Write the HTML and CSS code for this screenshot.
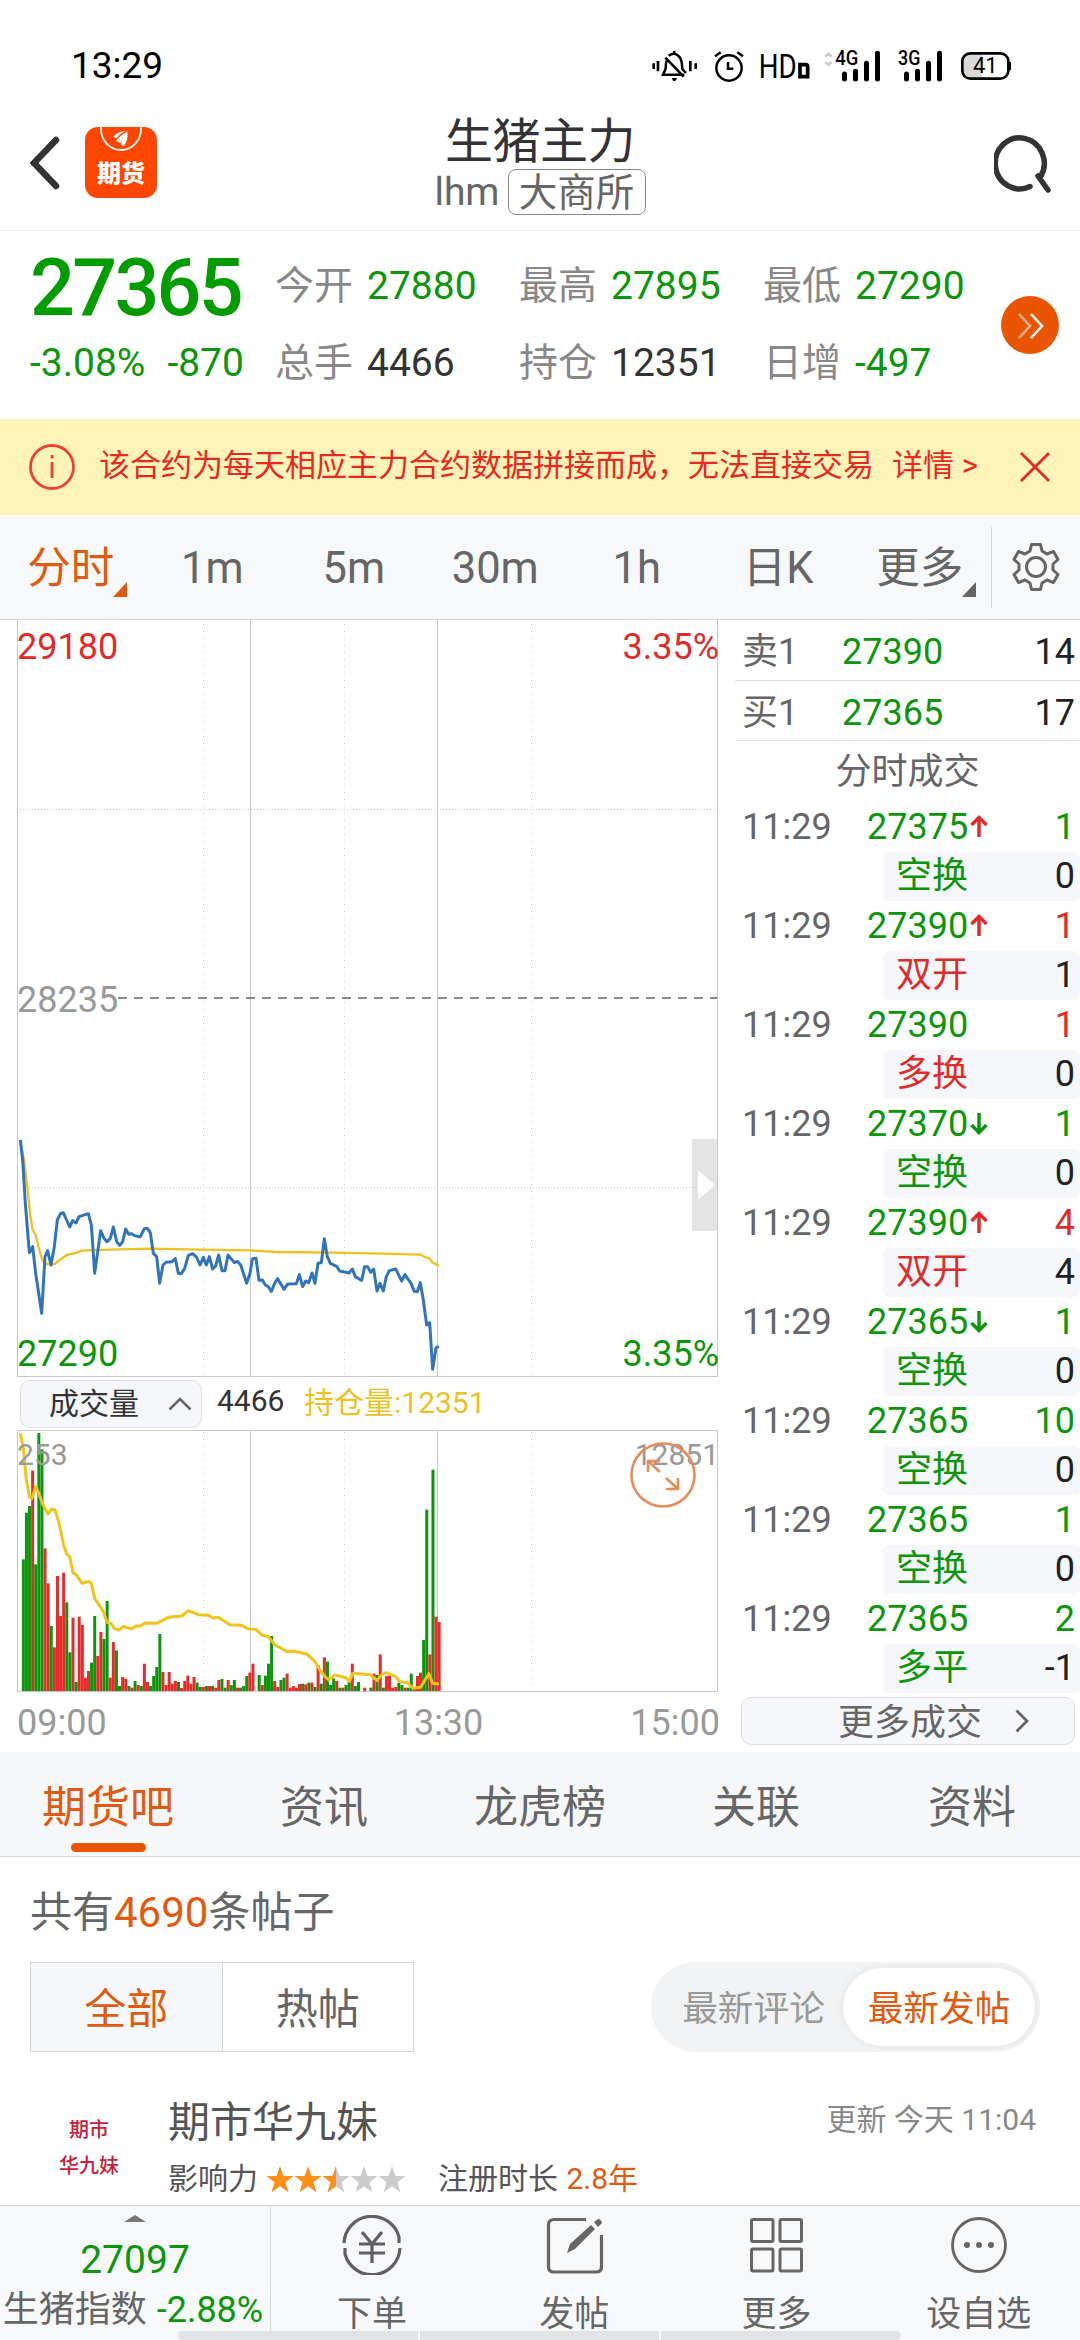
FILE: index.html
```html
<!DOCTYPE html>
<html lang="zh-CN">
<head>
    <meta charset="UTF-8">
    <title>生猪主力 lhm</title>
    <meta name="viewport" content="width=device-width, initial-scale=1.0">
    <link rel="stylesheet" href="styles.css">
</head>
<body>
    <div class="status-bar">
        <span class="status-time">13:29</span>
        <svg class="status-icons" viewBox="0 0 1200 150" fill="none" stroke="#000" stroke-width="7.500">
            <!-- 静音振动 -->
            <path d="M41 70v17M54 63v31M151 63v31M167 70v17" stroke-width="8"/>
            <path d="M80 62q-3 8-3 24l-8 18h64M86 47q17-12 31 2q9 9 10 38l11 12M76 53l55 57M103 33v8"/>
            <path d="M95 114h17l-6 9h-6z" fill="#000" stroke="none"/>
            <!-- 闹钟 -->
            <circle cx="267" cy="84" r="38"/>
            <path d="M225 49l17-12M309 49l-17-12M264 66v20h16"/>
            <text class="status-text" x="356" y="114" font-size="99" textLength="114" lengthAdjust="spacingAndGlyphs">HD</text>
            <path d="M480 74h17q6 0 6 6v30h-23z" stroke-width="11"/>
            <!-- 信号 -->
            <path d="M556 50l9-9l9 9M556 66l9 9l9-9" stroke="#ccc"/>
            <text class="status-text" x="586" y="76" font-size="58" font-weight="500" textLength="69" lengthAdjust="spacingAndGlyphs">4G</text>
            <path d="M613.500 102v15M646.500 94v23M679.500 70v47M712.500 40v77" stroke-width="15" stroke-linecap="round"/>
            <text class="status-text" x="774" y="76" font-size="58" font-weight="500" textLength="67" lengthAdjust="spacingAndGlyphs">3G</text>
            <path d="M799.500 102v15M832.500 94v23M865.500 70v47M898.500 40v77" stroke-width="15" stroke-linecap="round"/>
            <!-- 电量 -->
            <path d="M1026 40h-36q-23 0-23 24v28q0 24 23 24h36z" fill="#d9d9d9" stroke="none"/>
            <rect x="967" y="40" width="138" height="76" rx="24" stroke-width="8"/>
            <path d="M1105 66h8v24h-8z" fill="#000" stroke="none"/>
            <text class="status-text" x="1036" y="99" font-size="66" text-anchor="middle">41</text>
        </svg>
    </div>

    <header class="header">
        <div class="header-left">
            <svg class="back-icon" viewBox="0 0 30 54" fill="none" stroke="#333" stroke-width="6.500" stroke-linecap="round"><path d="M26 4L4 27L26 50"/></svg>
            <div class="app-logo">
                <svg class="logo-mark" viewBox="0 0 42 25" fill="none" stroke="#fff" stroke-width="1.800">
                    <path d="M1 0v2a20 21 0 0 0 40 0V0"/>
                    <path d="M13 10q5-6 13-6q-6 2-9 7zM16 14q4-6 11-9q-5 5-6 11zM21 18q1-8 6-14q2 8-3 15z" fill="#fff" stroke="none"/>
                </svg>
                <span class="logo-name">期货</span>
            </div>
        </div>
        <div class="header-title">
            <h1 class="title">生猪主力</h1>
            <div class="subtitle"><span>lhm</span><span class="exchange">大商所</span></div>
        </div>
        <svg class="search-icon" viewBox="0 0 60 62" fill="none" stroke="#333" stroke-width="5.500" stroke-linecap="round">
            <path d="M36 52.500A24.500 25.500 0 1 1 47 42"/>
            <path d="M44 42L54 56"/>
        </svg>
    </header>

    <section class="quote">
        <div class="quote-main">
            <div class="price">27365</div>
            <div class="change"><span>-3.08%</span><span>-870</span></div>
        </div>
        <div class="quote-grid">
            <div class="cell"><label>今开</label><b class="green">27880</b></div>
            <div class="cell"><label>最高</label><b class="green">27895</b></div>
            <div class="cell"><label>最低</label><b class="green">27290</b></div>
            <div class="cell"><label>总手</label><b>4466</b></div>
            <div class="cell"><label>持仓</label><b>12351</b></div>
            <div class="cell"><label>日增</label><b class="green">-497</b></div>
        </div>
        <div class="quote-more">
            <svg width="58" height="58" viewBox="0 0 58 58" fill="none" stroke-width="2.500"><path d="M18 18l11 12l-11 12" stroke="#f7b68f"/><path d="M30 18l11 12l-11 12" stroke="#fff"/></svg>
        </div>
    </section>

    <div class="notice">
        <svg class="notice-icon" viewBox="0 0 46 46" fill="none" stroke="#ee4035" stroke-width="2.800"><circle cx="23" cy="23" r="21.500"/><path d="M23 18v16M23 11v3.500"/></svg>
        <span class="notice-text">该合约为每天相应主力合约数据拼接而成，无法直接交易</span>
        <span class="notice-link">详情 &gt;</span>
        <svg class="notice-close" viewBox="0 0 30 30" fill="none" stroke="#e8291f" stroke-width="2.800"><path d="M1 1l28 28M29 1L1 29"/></svg>
    </div>

    <nav class="period-tabs">
        <div class="period active"><span class="more-mark">分时</span></div>
        <div class="period">1m</div>
        <div class="period">5m</div>
        <div class="period">30m</div>
        <div class="period">1h</div>
        <div class="period">日K</div>
        <div class="period"><span class="more-mark">更多</span></div>
        <div class="period-setting">
            <svg width="48" height="50" viewBox="0 0 48 50" fill="none" stroke="#666" stroke-width="3" stroke-linejoin="round">
                <path d="M19.500 2.500h9l1.500 6.500l5 3l6.500-2.500l4.500 8l-5 4.500v6l5 4.500l-4.500 8l-6.500-2.500l-5 3l-1.500 6.500h-9l-1.500-6.500l-5-3l-6.500 2.500l-4.500-8l5-4.500v-6l-5-4.500l4.500-8l6.500 2.500l5-3z"/>
                <circle cx="24" cy="25" r="9.500"/>
            </svg>
        </div>
    </nav>

    <main class="market">
        <div class="charts">
            <!-- 分时走势 -->
            <svg class="price-chart" width="728" height="757" viewBox="0 620 728 757" fill="none">
                <g stroke="#c8c8c8">
                    <path d="M17.500 620V1376.500H717.500V620M250.500 620V1376M437.500 620V1376"/>
                    <path d="M203.500 624V1376M344.500 624V1376M531.500 624V1376" stroke-dasharray="1 6"/>
                    <path d="M20 809.500H717M20 1187.500H717" stroke-dasharray="1 2"/>
                </g>
                <path d="M118 998H717" stroke="#888" stroke-width="2" stroke-dasharray="9 7"/>
                <g transform="translate(0 1100) scale(.33333)" stroke-linejoin="round">
                    <polyline stroke="#edc11f" stroke-width="7" points="61,125 72,180 82,260 90,340 98,390 107,405 118,450 127,480 137,492 163,492 200,465 230,458 245,452 330,449 450,446 600,449 750,451 830,456 1000,458 1150,461 1262,464 1275,471 1288,475 1298,488 1317,497"/>
                    <polyline stroke="#3274bb" stroke-width="9" points="61,120 68,180 76,310 88,458 98,440 107,520 125,640 135,470 143,452 153,495 163,440 172,360 182,340 190,338 209,381 218,362 228,369 237,350 265,341 274,375 284,520 302,392 312,415 321,425 331,415 340,381 350,425 359,436 368,425 377,387 386,403 395,401 405,407 421,410 433,386 442,385 451,398 460,460 470,470 479,550 489,495 498,487 516,485 526,476 535,520 544,521 554,505 565,466 578,461 590,472 600,495 610,472 619,495 628,470 638,507 647,498 656,465 666,512 675,512 684,465 703,488 712,484 722,495 740,550 750,520 757,477 768,475 777,541 787,540 796,555 805,560 814,574 824,550 833,536 852,568 863,552 889,551 898,524 908,560 917,543 926,548 936,519 945,550 954,490 964,488 973,416 982,470 991,490 1010,499 1019,513 1047,519 1057,507 1066,530 1085,541 1094,500 1103,500 1112,517 1121,507 1131,573 1140,550 1150,573 1159,530 1168,512 1187,507 1205,543 1215,524 1233,550 1243,574 1252,575 1261,548 1270,600 1280,675 1289,668 1298,808 1308,743 1317,740"/>
                </g>
                <g class="chart-label">
                    <text x="17" y="659" fill="#e02b2b">29180</text>
                    <text x="719" y="659" fill="#e02b2b" text-anchor="end">3.35%</text>
                    <text x="17" y="1012" fill="#999">28235</text>
                    <text x="17" y="1366" fill="#0b960b">27290</text>
                    <text x="719" y="1366" fill="#0b960b" text-anchor="end">3.35%</text>
                </g>
                <rect x="692" y="1139" width="25" height="92" rx="2" fill="#dcdcdc" fill-opacity=".8"/>
                <path d="M698 1170v30l17-15z" fill="#fff"/>
            </svg>

            <div class="volume-bar">
                <div class="indicator">成交量
                    <svg width="24" height="14" viewBox="0 0 24 14" fill="none" stroke="#666" stroke-width="2.600"><path d="M1.500 12.500L12 2l10.500 10.500"/></svg>
                </div>
                <span class="volume-num">4466</span>
                <span class="hold-num">持仓量:12351</span>
            </div>

            <!-- 成交量与持仓量 -->
            <svg class="volume-chart" width="728" height="262" viewBox="0 1430 728 262" fill="none">
                <g stroke="#c8c8c8">
                    <path d="M17.500 1430.500H717.500V1691.500H17.500zM250.500 1430V1691M437.500 1430V1691"/>
                    <path d="M203.500 1432V1691M344.500 1432V1691M531.500 1432V1691" stroke-dasharray="1 6"/>
                </g>
                <g transform="translate(0 1370) scale(.33333)" stroke-linejoin="round">
                    <g id="volume-bars"></g>
                    <polyline stroke="#f0c419" stroke-width="9" points="61,190 70,235 79,330 89,382 96,385 107,350 116,368 127,400 144,432 154,418 165,420 176,455 191,525 200,552 209,560 219,608 230,616 246,640 265,634 274,640 284,685 302,712 312,730 321,757 333,760 343,776 358,780 370,769 395,777 408,768 422,768 435,759 470,760 505,742 545,738 565,722 595,734 625,736 640,744 655,742 690,764 725,766 745,777 768,778 785,795 805,800 825,825 862,845 880,843 922,853 945,875 960,900 975,920 987,930 1003,915 1038,923 1048,934 1058,910 1110,914 1131,932 1145,914 1159,908 1187,920 1200,935 1222,938 1238,955 1262,952 1275,930 1287,911 1298,940 1317,942"/>
                </g>
                <g class="chart-label-small">
                    <text x="17" y="1465" fill="#999">253</text>
                    <text x="719" y="1465" fill="#999" text-anchor="end">12851</text>
                </g>
                <g stroke="#e98b58" stroke-width="2.600">
                    <circle cx="663" cy="1475" r="31.500"/>
                    <path d="M660 1472l-12-11M648 1472v-11h12M666 1478l12 11M678 1478v11h-12"/>
                </g>
            </svg>
            <div class="time-axis"><span>09:00</span><span class="axis-mid">13:30</span><span>15:00</span></div>
        </div>

        <aside class="deals">
            <div class="level"><span>卖1</span><span class="green">27390</span><b>14</b></div>
            <div class="level"><span>买1</span><span class="green">27365</span><b>17</b></div>
            <div class="deals-title">分时成交</div>
            <div id="deal-list"></div>
            <div class="deals-more">更多成交
                <svg width="14" height="24" viewBox="0 0 14 24" fill="none" stroke="#666" stroke-width="2.800"><path d="M1.500 1.500L12 12L1.500 22.500"/></svg>
            </div>
        </aside>
    </main>

    <nav class="section-tabs">
        <a class="active">期货吧</a>
        <a>资讯</a>
        <a>龙虎榜</a>
        <a>关联</a>
        <a>资料</a>
    </nav>

    <section class="forum">
        <p class="post-count">共有<em>4690</em>条帖子</p>
        <div class="filters">
            <div class="segment"><span class="active">全部</span><span>热帖</span></div>
            <div class="sort"><span>最新评论</span><span class="active">最新发帖</span></div>
        </div>
        <article class="post">
            <div class="avatar"><span>期市</span><span>华九妹</span></div>
            <div class="post-user">
                <div class="user-name">期市华九妹</div>
                <div class="user-meta">
                    <span>影响力</span>
                    <svg class="stars" width="140" height="28" viewBox="0 0 140 28">
                        <defs><path id="star" d="M14 0l3.500 10h10l-8 6.200l3 10.300l-8.500-6.300l-8.500 6.300l3-10.300L.5 10h10z"/><clipPath id="half"><path d="M0 0h14v28H0z"/></clipPath></defs>
                        <g fill="#ff8f1c"><use href="#star"/><use href="#star" x="28"/></g>
                        <g fill="#ccc"><use href="#star" x="56"/><use href="#star" x="84"/><use href="#star" x="112"/></g>
                        <g transform="translate(56 0)"><use href="#star" fill="#ff8f1c" clip-path="url(#half)"/></g>
                    </svg>
                    <span class="reg">注册时长 <em>2.8年</em></span>
                </div>
            </div>
            <div class="post-time">更新 今天 11:04</div>
        </article>
    </section>

    <footer class="toolbar">
        <div class="index-box">
            <i class="up-mark"></i>
            <div class="index-price">27097</div>
            <div class="index-name">生猪指数 <span class="green">-2.88%</span></div>
        </div>
        <div class="tool">
            <svg viewBox="0 0 60 60" fill="none" stroke="#606062" stroke-width="3.200">
                <path d="M2 28A28 28 0 0 1 57 22V28M58 33A28 28 0 0 1 3 39V33"/>
                <path d="M20 17l10 12l10-12M17 29h26M17 38h26M30 29v19"/>
            </svg>
            <span>下单</span>
        </div>
        <div class="tool">
            <svg viewBox="0 0 60 60" fill="none" stroke="#666" stroke-width="3.200">
                <path d="M42 4.500H10Q4.500 4.500 4.500 10v42q0 5 5.500 5h42q5.500 0 5.500-5V20"/>
                <path d="M23 38l3-9L47 10l4 4L31 34z" fill="#666" stroke="none"/>
                <path d="M50 7l4-3q3 0 4 4l-4 4z" fill="#666" stroke="none"/>
            </svg>
            <span>发帖</span>
        </div>
        <div class="tool">
            <svg viewBox="0 0 60 60" fill="none" stroke="#666" stroke-width="3">
                <rect x="4.500" y="4.500" width="21.500" height="22" rx="1.500"/><rect x="33" y="4.500" width="21.500" height="22" rx="1.500"/>
                <rect x="4.500" y="34" width="21.500" height="22" rx="1.500"/><rect x="33" y="34" width="21.500" height="22" rx="1.500"/>
            </svg>
            <span>更多</span>
        </div>
        <div class="tool">
            <svg viewBox="0 0 60 60" fill="none" stroke="#666" stroke-width="2.800">
                <circle cx="30" cy="30" r="26.500"/>
                <g fill="#666" stroke="none"><circle cx="18" cy="30" r="3"/><circle cx="30" cy="30" r="3"/><circle cx="42" cy="30" r="3"/></g>
            </svg>
            <span>设自选</span>
        </div>
        <div class="home-bar"><i></i><i></i><i></i></div>
    </footer>

    <script src="script.js"></script>
</body>
</html>
```
FILE: styles.css
```css
body {
    margin: 0;
    width: 1080px;
    height: 2340px;
    overflow: hidden;
    background-color: #fff;
    color: #333;
    font-family: Roboto, "Noto Sans CJK SC", sans-serif;
}

b,
em,
i {
    font-weight: normal;
    font-style: normal;
}

svg {
    display: block;
    flex-shrink: 0;
}

.green {
    color: #0b960b;
}

.red {
    color: #e02b2b;
}

/* 状态栏 */
.status-bar {
    height: 105px;
    padding: 0 40px 0 71px;
    display: flex;
    justify-content: space-between;
    box-sizing: border-box;
}

.status-time {
    margin-top: 44px;
    font-size: 37px;
    line-height: 44px;
    color: #000;
}

.status-icons {
    width: 400px;
    height: 50px;
    margin-top: 40px;
}

.status-text {
    fill: #000;
    stroke: none;
}

/* 标题栏 */
.header {
    height: 126px;
    box-sizing: border-box;
    border-bottom: 1px solid #eee;
    padding: 0 30px;
    display: grid;
    grid-template-columns: 1fr 300px 1fr;
}

.header-left {
    display: flex;
    gap: 25px;
    margin-top: 22px;
}

.back-icon {
    width: 30px;
    height: 54px;
    margin-top: 9px;
}

.app-logo {
    width: 72px;
    height: 71px;
    border-radius: 13px;
    background-color: #ff4600;
    display: flex;
    flex-direction: column;
    align-items: center;
}

.logo-mark {
    width: 42px;
    height: 25px;
}

.logo-name {
    color: #fff;
    font-size: 24px;
    line-height: 44px;
    font-weight: 900;
}

.header-title {
    text-align: center;
}

.title {
    margin: 10px 0 0;
    font-size: 48px;
    line-height: 54px;
    font-weight: normal;
    letter-spacing: -0.500px;
}

.subtitle {
    display: flex;
    justify-content: center;
    gap: 8px;
    font-size: 39px;
    line-height: 46px;
    color: #666;
}

.exchange {
    box-sizing: border-box;
    width: 138px;
    height: 46px;
    line-height: 45px;
    font-size: 38.500px;
    border: 1px solid #888;
    border-radius: 8px;
}

.search-icon {
    width: 60px;
    height: 62px;
    margin-top: 29px;
    justify-self: end;
    margin-right: -4px;
}

/* 行情 */
.quote {
    height: 188px;
    display: flex;
    padding-left: 30px;
}

.quote-main {
    width: 245px;
    color: #0b960b;
}

.price {
    margin-top: 17px;
    height: 79px;
    line-height: 80px;
    font-size: 79px;
    font-weight: 500;
    color: #009c00;
    letter-spacing: -2.700px;
}

.change {
    margin-top: 13px;
    display: flex;
    gap: 22px;
    font-size: 39px;
    line-height: 46px;
}

.quote-grid {
    display: grid;
    grid-template-columns: repeat(3, 244px);
    grid-auto-rows: 77px;
    margin-top: 17px;
    font-size: 39px;
    line-height: 77px;
}

.cell {
    display: flex;
    gap: 14px;
}

.cell label {
    color: #888;
    width: 78px;
}

.quote-more {
    width: 58px;
    height: 58px;
    margin: 65px 0 0 -6px;
    border-radius: 50%;
    background-color: #ea5504;
}

.notice {
    height: 96px;
    background-color: #fef4b9;
    color: #e8291f;
    display: flex;
    align-items: center;
    font-size: 31px;
    padding-left: 29px;
}

.notice-icon {
    width: 46px;
    height: 46px;
}

.notice-text {
    margin: -9px 18px 0 24px;
    white-space: nowrap;
}

.notice-link {
    width: 90px;
    margin-top: -9px;
    white-space: nowrap;
}

.notice-close {
    width: 30px;
    height: 30px;
    margin-left: auto;
    margin-right: 30px;
}

/* 周期切换 */
.period-tabs {
    height: 105px;
    box-sizing: border-box;
    border-bottom: 1px solid #d2d4d8;
    background-color: #f6f8fa;
    display: flex;
    align-items: center;
    color: #666;
    font-size: 43.500px;
}

.period {
    width: 141.500px;
    line-height: 60px;
    margin-top: 4px;
    text-align: center;
}

.period.active {
    color: #e05a10;
}

.more-mark {
    position: relative;
}

.more-mark::after {
    content: "";
    position: absolute;
    right: -13px;
    bottom: -3px;
    border-left: 14px solid transparent;
    border-bottom: 15px solid currentColor;
}

.period-setting {
    flex: 1;
    height: 81px;
    border-left: 1px solid #d4d6d9;
    display: flex;
    align-items: center;
    justify-content: center;
}

.market {
    display: flex;
    height: 1132px;
}

.charts {
    width: 735px;
}

.chart-label {
    font-size: 36px;
}

.chart-label-small {
    font-size: 30px;
}

.volume-bar {
    height: 53px;
    display: flex;
    align-items: center;
    font-size: 30px;
    padding-left: 20px;
}

.indicator {
    box-sizing: border-box;
    width: 182px;
    height: 48px;
    border: 1px solid #dcdee2;
    border-radius: 10px;
    background-color: #f6f7fa;
    display: flex;
    align-items: center;
    justify-content: space-between;
    padding: 0 9px 6px 28px;
}

.indicator svg {
    margin-top: 7px;
}

.volume-num {
    width: 87px;
    margin: -7px 0 0 15px;
}

.hold-num {
    margin-top: -7px;
    color: #edc11f;
}

.time-axis {
    position: relative;
    width: 703px;
    margin-left: 17px;
    display: flex;
    justify-content: space-between;
    font-size: 36px;
    line-height: 62px;
    color: #999;
}

.axis-mid {
    margin-left: 140px;
}

/* 盘口与成交明细 */
.deals {
    width: 345px;
    color: #666;
    font-size: 36px;
}

.level {
    height: 60px;
    line-height: 65px;
    box-sizing: border-box;
    border-bottom: 1px solid #dcdde0;
    display: grid;
    grid-template-columns: 100px 1fr 60px;
    padding: 0 5px 0 7px;
}

.level:first-child {
    height: 61px;
}

.level b,
.deal b {
    text-align: right;
    color: #222;
}

.deals-title {
    height: 62px;
    line-height: 62px;
    text-align: center;
}

.deal {
    height: 99px;
}

.deal-row,
.deal-type {
    display: flex;
    line-height: 49px;
    height: 49px;
    padding-right: 5px;
}

.deal-row span:first-child {
    width: 125px;
    padding-left: 7px;
}

.deal-row svg {
    margin: 12px 0 0 2px;
}

.deal-row b,
.deal-type b {
    margin-left: auto;
}

.deal .red {
    color: #e02b2b;
}

.deal .green {
    color: #0b960b;
}

.deal-type {
    margin-left: 148px;
    padding-left: 13px;
    border-radius: 6px;
    background-color: #f6f7fa;
}

.deals-more {
    box-sizing: border-box;
    width: 334px;
    height: 48px;
    margin: 3px 0 0 6px;
    border: 1px solid #dcdee2;
    border-radius: 10px;
    background-color: #f6f7fa;
    display: flex;
    align-items: center;
    gap: 33px;
    padding: 0 0 5px 96px;
}

.deals-more svg {
    margin-top: 4px;
}

.section-tabs {
    height: 105px;
    box-sizing: border-box;
    border-bottom: 1px solid #d6d8da;
    background-color: #f6f7f9;
    display: grid;
    grid-template-columns: repeat(5, 1fr);
    text-align: center;
    font-size: 44px;
    line-height: 112px;
    color: #666;
}

.section-tabs .active {
    position: relative;
    color: #e05a10;
}

.section-tabs .active::after {
    content: "";
    position: absolute;
    left: 71px;
    top: 91px;
    width: 75px;
    height: 9px;
    border-radius: 5px;
    background-color: #ea5504;
}

/* 帖子 */
.forum {
    height: 348px;
    padding: 0 40px 0 30px;
    overflow: hidden;
}

.forum em {
    color: #e05a10;
}

.post-count {
    margin: 28px 0 21px;
    font-size: 42px;
    line-height: 56px;
    color: #666;
}

.filters {
    display: flex;
    justify-content: space-between;
}

.segment {
    display: flex;
    box-sizing: border-box;
    width: 384px;
    height: 90px;
    border: 1px solid #d4d6d9;
    font-size: 42px;
    line-height: 93px;
    text-align: center;
    color: #666;
}

.segment span {
    flex: 1;
}

.segment .active {
    background-color: #f6f7fa;
    border-right: 1px solid #d4d6d9;
    color: #e05a10;
}

.sort {
    box-sizing: border-box;
    width: 389px;
    height: 90px;
    padding: 6px 5px 6px 0;
    border-radius: 45px;
    background-color: #f2f3f5;
    display: flex;
    font-size: 35.700px;
    line-height: 83px;
    color: #999;
    text-align: center;
}

.sort span {
    width: 192px;
    height: 78px;
    padding-left: 5px;
    box-sizing: border-box;
}

.sort span:first-child {
    padding-left: 13px;
}

.sort .active {
    padding-left: 0;
    border-radius: 39px;
    background-color: #fff;
    color: #e05a10;
    box-shadow: 0 0 8px rgba(0, 0, 0, 0.08);
}

.post {
    display: flex;
    margin-top: 42px;
    color: #555;
}

.avatar {
    width: 118px;
    margin-right: 20px;
    margin-top: 18px;
    display: flex;
    flex-direction: column;
    text-align: center;
    font-size: 20px;
    line-height: 36px;
    font-weight: 500;
    color: #c8203c;
}

.user-name {
    font-size: 42px;
    line-height: 58px;
}

.user-meta {
    display: flex;
    align-items: center;
    font-size: 30px;
    line-height: 54px;
}

.stars {
    margin: 2px 32px 0 8px;
}

.reg em {
    margin-left: 1px;
}

.post-time {
    margin-left: auto;
    margin-right: 4px;
    font-size: 30px;
    line-height: 51px;
    color: #888;
}

/* 底部工具栏 */
.toolbar {
    position: relative;
    height: 135px;
    box-sizing: border-box;
    border-top: 1px solid #d6d8da;
    background-color: #f7f8fa;
    display: flex;
    color: #666;
}

.index-box {
    width: 271px;
    box-sizing: border-box;
    border-right: 1px solid #d6d8da;
    display: flex;
    flex-direction: column;
    align-items: center;
    font-size: 36px;
    white-space: nowrap;
}

.up-mark {
    margin-top: 9px;
    border: 11px solid transparent;
    border-top: 0;
    border-bottom: 7px solid #777;
}

.index-price {
    margin-top: 13px;
    font-size: 39px;
    line-height: 50px;
    color: #0b960b;
}

.index-name {
    margin-right: 4px;
    line-height: 51px;
    word-spacing: 1px;
}

.tool {
    flex: 1;
    display: flex;
    flex-direction: column;
    align-items: center;
    font-size: 35px;
    line-height: 51px;
}

.tool svg {
    width: 60px;
    height: 60px;
    margin: 9px 0 14px;
}

.home-bar {
    position: absolute;
    left: 178px;
    bottom: 0;
    width: 723px;
    height: 9px;
    border-radius: 5px;
    overflow: hidden;
    display: flex;
    gap: 2px;
}

.home-bar i {
    flex: 1;
    background-color: #e2e3e5;
}
```
FILE: script.js
```javascript
// 每分钟成交量柱: 颜色 + 高度
const volumes = ('g395 g535 g555 r661 g380 g774 g725 r428 r323 g195 r131 r345 r225 r355 g266 g116 r220 g27 r223 r198 ' +
    'r40 r60 g85 g225 r105 r177 g156 g270 r40 r147 g122 g15 r42 r37 g15 r10 g30 r18 g15 r82 ' +
    'r27 g15 g45 g72 g171 r57 r18 r57 r22 r30 g27 r9 r30 r46 r22 r42 g25 g12 r12 g15 ' +
    'r15 g15 r10 r33 g36 g10 r33 g18 g33 r10 g10 g15 g45 r55 r82 g0 g48 r18 g46 g82 ' +
    'g165 r30 r12 g33 g40 r52 r10 r15 r10 r21 g22 r20 g25 r25 g12 r77 g22 r101 g88 g18 ' +
    'g38 r30 g10 r10 g18 g27 r82 g15 g27 g0 r10 g0 g10 r52 g48 r110 g10 r45 r45 r10 ' +
    'r12 g25 g18 r10 g10 g52 r8 r45 r55 g153 g544 r110 g664 r223 r207').split(' ');

document.getElementById('volume-bars').innerHTML = volumes.map((item, i) => {
    const height = Number(item.slice(1));
    const color = item[0] === 'r' ? '#e82a2a' : '#0b960b';
    return `<rect x="${65.5 + i * 9.31}" y="${963 - height}" width="9" height="${height}" fill="${color}"/>`;
}).join('');

// 成交明细: 价格, 方向, 手数, 手数颜色, 类型, 类型颜色, 增仓
const deals = [
    ['27375', 'up', '1', 'green', '空换', 'green', '0'],
    ['27390', 'up', '1', 'red', '双开', 'red', '1'],
    ['27390', '', '1', 'red', '多换', 'red', '0'],
    ['27370', 'down', '1', 'green', '空换', 'green', '0'],
    ['27390', 'up', '4', 'red', '双开', 'red', '4'],
    ['27365', 'down', '1', 'green', '空换', 'green', '0'],
    ['27365', '', '10', 'green', '空换', 'green', '0'],
    ['27365', '', '1', 'green', '空换', 'green', '0'],
    ['27365', '', '2', 'green', '多平', 'green', '-1']
];

const arrows = {
    up: '<svg width="18" height="23" viewBox="0 0 18 23" fill="none" stroke="#e02b2b" stroke-width="3.500"><path d="M9 22V3M1.500 10L9 2.500L16.500 10"/></svg>',
    down: '<svg width="18" height="23" viewBox="0 0 18 23" fill="none" stroke="#0b960b" stroke-width="3.500"><path d="M9 1V20M1.500 13L9 20.500L16.500 13"/></svg>'
};

document.getElementById('deal-list').innerHTML = deals.map(d => `
    <div class="deal">
        <div class="deal-row"><span>11:29</span><span class="green">${d[0]}</span>${arrows[d[1]] || ''}<b class="${d[3]}">${d[2]}</b></div>
        <div class="deal-type"><span class="${d[5]}">${d[4]}</span><b>${d[6]}</b></div>
    </div>
`).join('');
```
